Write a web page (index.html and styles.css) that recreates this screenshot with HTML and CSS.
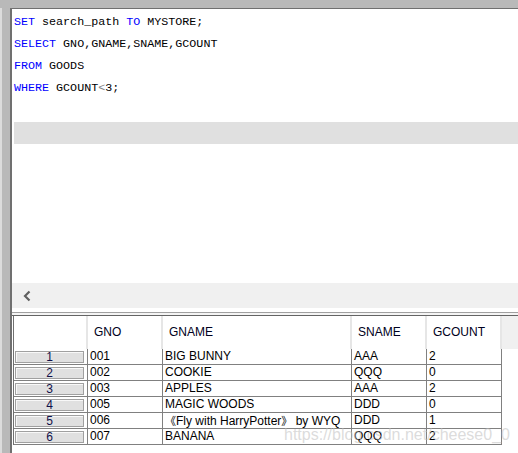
FILE: index.html
```html
<!DOCTYPE html>
<html>
<head>
<meta charset="utf-8">
<link rel="stylesheet" href="styles.css">
</head>
<body>
<div class="top"></div>
<div class="main">
  <div class="gutter"></div>
  <div class="content">
    <div class="editor">
      <div class="code">
        <div class="ln"><span class="kw">SET</span> search_path <span class="kw">TO</span> MYSTORE;</div>
        <div class="ln"><span class="kw">SELECT</span> GNO,GNAME,SNAME,GCOUNT</div>
        <div class="ln"><span class="kw">FROM</span> GOODS</div>
        <div class="ln"><span class="kw">WHERE</span> GCOUNT<span class="op">&lt;</span>3;</div>
      </div>
      <div class="band"></div>
    </div>
    <div class="hscroll">
      <svg width="10" height="12" viewBox="0 0 10 12"><path d="M7.5 1.5 L3 6 L7.5 10.5" fill="none" stroke="#606060" stroke-width="2.2"/></svg>
    </div>
    <div class="sep"></div>
    <div class="grid">
      <div class="hrow">
        <div class="hc"></div>
        <div class="hc">GNO</div>
        <div class="hc">GNAME</div>
        <div class="hc">SNAME</div>
        <div class="hc">GCOUNT</div>
        <div class="hfill"></div>
      </div>
      <div class="row"><div class="rh"><span class="btn">1</span></div><div class="c">001</div><div class="c">BIG BUNNY</div><div class="c">AAA</div><div class="c">2</div></div>
      <div class="row"><div class="rh"><span class="btn">2</span></div><div class="c">002</div><div class="c">COOKIE</div><div class="c">QQQ</div><div class="c">0</div></div>
      <div class="row"><div class="rh"><span class="btn">3</span></div><div class="c">003</div><div class="c">APPLES</div><div class="c">AAA</div><div class="c">2</div></div>
      <div class="row"><div class="rh"><span class="btn">4</span></div><div class="c">005</div><div class="c">MAGIC WOODS</div><div class="c">DDD</div><div class="c">0</div></div>
      <div class="row"><div class="rh"><span class="btn">5</span></div><div class="c">006</div><div class="c"><span class="br">《</span>Fly with HarryPotter<span class="br">》</span> by WYQ</div><div class="c">DDD</div><div class="c">1</div></div>
      <div class="row"><div class="rh"><span class="btn">6</span></div><div class="c">007</div><div class="c">BANANA</div><div class="c">QQQ</div><div class="c">2</div></div>
    </div>
    <div class="wm">https://blog.csdn.net/cheese0_0</div>
  </div>
</div>
</body>
</html>
```

FILE: styles.css
```css
html, body {
  margin: 0;
  padding: 0;
  background: #ffffff;
}
body {
  width: 518px;
  height: 453px;
  overflow: hidden;
  font-family: "Liberation Sans", Arial, sans-serif;
}
.top {
  height: 8px;
  background: #b9b9b9;
}
.main {
  display: flex;
  height: 445px;
}
.gutter {
  width: 8px;
  background: #b9b9b9;
  border-left: 2px solid #dcdcdc;
  border-right: 2px solid #707070;
  flex: none;
}
.content {
  flex: 1;
  position: relative;
  display: flex;
  flex-direction: column;
}
.editor {
  height: 272px;
  border-top: 1px solid #707070;
  background: #fff;
  padding-top: 2px;
}
.code {
  padding-left: 2px;
  font-family: "Liberation Mono", "DejaVu Sans Mono", monospace;
  font-size: 11.7px;
  color: #000;
}
.ln {
  height: 22px;
  line-height: 22px;
  white-space: pre;
}
.kw { color: #0000ff; }
.op { color: #808080; }
.band {
  margin-top: 23px;
  margin-left: 2px;
  height: 22px;
  background: #e0e0e0;
}
.hscroll {
  height: 25px;
  background: #f0f0f0;
  display: flex;
  align-items: center;
  padding-left: 10px;
}
.hscroll svg { display: block; }
.sep {
  height: 4px;
  background: #fff;
  border-bottom: 1px solid #a0a0a0;
  box-shadow: 0 2px 0 #f4f4f4, 0 3px 0 #646464;
  margin-bottom: 3px;
}
.grid {
  margin-left: 1px;
  border-left: 1px solid #707070;
  font-size: 12px;
  color: #000;
}
.hrow {
  display: grid;
  grid-template-columns: 74px 75px 189px 75px 75px 1fr;
  height: 33px;
}
.hc {
  background: #fff;
  border-right: 2px solid #e6e6e6;
  line-height: 33px;
  padding-left: 6px;
  color: #000020;
}
.hfill { background: #f0f0f0; }
.row {
  display: grid;
  grid-template-columns: 74px 75px 189px 75px 75px;
  height: 16px;
  width: 488px;
}
.rh, .c {
  border-right: 1px solid #808080;
  border-bottom: 1px solid #808080;
}
.rh {
  display: flex;
  align-items: center;
  padding-left: 1px;
  box-shadow: inset -2px 0 0 #fff;
}
.btn {
  display: block;
  width: 67px;
  height: 10px;
  background: #e0e0e0;
  border: 1px solid #a0a0a0;
  box-shadow: inset 1px 1px 0 #f8f8f8;
  text-align: center;
  line-height: 11px;
  color: #10104a;
  font-size: 12px;
}
.c {
  padding-left: 2px;
  line-height: 15px;
  white-space: nowrap;
  overflow: hidden;
}
.br {
  font-family: "Noto Sans CJK SC", sans-serif;
  font-size: 11px;
}
.wm {
  position: absolute;
  left: 272px;
  top: 418px;
  font-size: 16px;
  color: rgba(190, 190, 190, 0.55);
  white-space: nowrap;
}
```
